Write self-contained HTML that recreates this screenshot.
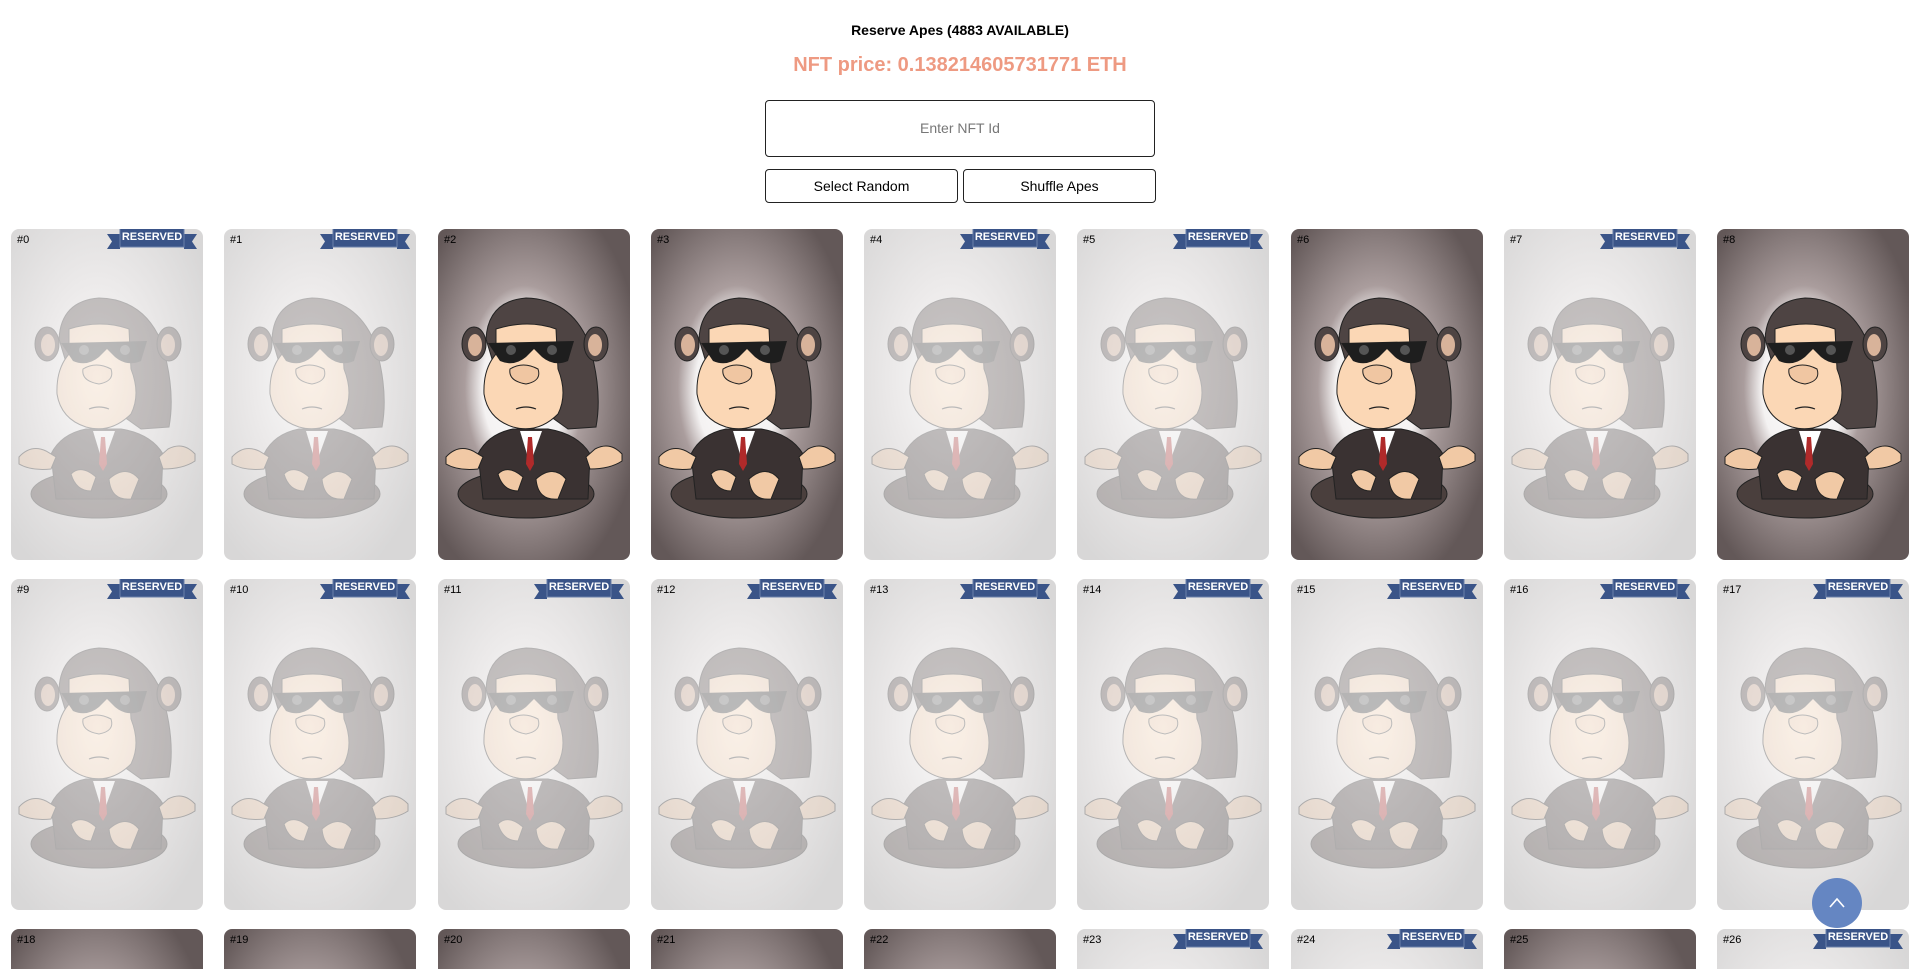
<!DOCTYPE html>
<html><head><meta charset="utf-8"><style>
html,body{margin:0;padding:0;background:#fff;overflow:hidden;width:1920px;height:969px;font-family:"Liberation Sans",Arial,sans-serif}
#wrap{position:relative;width:1920px;height:969px;overflow:hidden}
.t{position:absolute;left:0;width:1920px;text-align:center}
#h{top:22px;font-size:14px;font-weight:bold;color:#000}
#p{top:54px;font-size:20px;font-weight:bold;color:#ee9a82}
#inp{position:absolute;left:765px;top:100px;width:388px;height:55px;border:1px solid #222;border-radius:4px;text-align:center;line-height:55px;font-size:14px;color:#777}
.b{position:absolute;top:169px;width:191px;height:32px;border:1px solid #222;border-radius:4px;text-align:center;line-height:32px;font-size:14px;color:#000}
.c{position:absolute;width:192px;height:331px;border-radius:8px;overflow:hidden}
.c svg{position:absolute;left:0;top:0}
.n{position:absolute;left:6px;top:5px;font-size:11px;color:#000}
.r{position:absolute;right:6px;top:-1px;width:90px;height:24px}
#up{position:absolute;left:1812px;top:878px;width:50px;height:50px;border-radius:50%;background:#6586c2}
</style></head><body><div id="wrap">
<svg width="0" height="0" style="position:absolute">
<defs>
<radialGradient id="gd" cx="0.45" cy="0.48" r="0.62"><stop offset="0" stop-color="#fff"/><stop offset="0.35" stop-color="#f4f2f2"/><stop offset="0.5" stop-color="#aa9d9d"/><stop offset="1" stop-color="#635858"/></radialGradient>
<radialGradient id="gl" cx="0.45" cy="0.45" r="0.65"><stop offset="0" stop-color="#fbfbfb"/><stop offset="0.45" stop-color="#eceaea"/><stop offset="1" stop-color="#d8d7d7"/></radialGradient>
<symbol id="ape" viewBox="0 0 192 331">
<ellipse cx="88" cy="265" rx="68" ry="24" fill="#4a3f3d" stroke="#222" stroke-width="1"/>
<path d="M40 225 Q50 205 75 200 L110 200 Q140 205 152 225 L150 270 L45 270 Z" fill="#3a3232" stroke="#222"/>
<path d="M82 202 L92 235 L104 202 Z" fill="#fff"/>
<path d="M90 208 L94 208 L96 235 L92 242 L88 235 Z" fill="#b02a2a"/>
<path d="M8 228 Q20 215 35 222 L45 228 L40 240 Q20 242 8 235Z" fill="#f1c9a5" stroke="#222" stroke-width="1"/>
<path d="M184 225 Q172 212 157 220 L148 228 L152 240 Q172 240 184 232Z" fill="#f1c9a5" stroke="#222" stroke-width="1"/>
<path d="M60 245 Q70 235 85 248 L80 262 Q65 262 60 245Z" fill="#f1c9a5" stroke="#222" stroke-width="1"/>
<path d="M98 250 Q115 235 128 250 L120 270 Q100 272 98 250Z" fill="#f1c9a5" stroke="#222" stroke-width="1"/>
<path d="M48 110 Q50 72 88 69 Q132 70 150 112 Q165 160 158 198 L130 200 L60 150Z" fill="#4e4443" stroke="#222" stroke-width="1"/>
<ellipse cx="36" cy="115" rx="12" ry="17" fill="#4e4443" stroke="#222"/>
<ellipse cx="37" cy="116" rx="7" ry="11" fill="#d8b39a"/>
<ellipse cx="158" cy="115" rx="12" ry="17" fill="#4e4443" stroke="#222"/>
<ellipse cx="157" cy="116" rx="7" ry="11" fill="#d8b39a"/>
<path d="M58 100 Q90 90 118 100 L120 140 Q130 165 120 185 Q100 205 75 198 Q50 190 46 165 Q45 140 58 125Z" fill="#fbd7b5" stroke="#222" stroke-width="1"/>
<path d="M50 114 L136 112 L130 132 Q116 138 104 128 L96 120 L88 128 Q76 138 62 132Z" fill="#1e1e1e"/>
<circle cx="73" cy="121" r="5" fill="#555"/><circle cx="114" cy="121" r="5" fill="#555"/>
<path d="M72 140 Q85 132 100 140 Q104 152 88 155 Q70 152 72 140Z" fill="#f0c6a2" stroke="#222" stroke-width="1"/>
<path d="M78 180 Q88 176 98 180" fill="none" stroke="#222" stroke-width="1.2"/>
</symbol>
<symbol id="rib" viewBox="0 0 90 24">
<path d="M0 6 L13 6 L13 21 L0 21 L5 13.5Z" fill="#3a5488"/>
<path d="M90 6 L77 6 L77 21 L90 21 L85 13.5Z" fill="#3a5488"/>
<rect x="13" y="0" width="64" height="19" fill="#3a5488" stroke="#6a80aa" stroke-width="1"/>
</symbol>
</defs></svg>
<div class="t" id="h">Reserve Apes (4883 AVAILABLE)</div>
<div class="t" id="p">NFT price: 0.138214605731771 ETH</div>
<div id="inp">Enter NFT Id</div>
<div class="b" style="left:765px">Select Random</div>
<div class="b" style="left:963px">Shuffle Apes</div>
<div id="cards"></div>
<div id="up"><svg width="50" height="50"><path d="M18 29 L25 21 L32 29" fill="none" stroke="#fff" stroke-width="1.6"/></svg></div>
</div>
<script>
var dark={2:1,3:1,6:1,8:1,18:1,19:1,20:1,21:1,22:1,25:1};
var h='';
for(var i=0;i<27;i++){var col=i%9,row=Math.floor(i/9);var x=Math.round(11+col*213.25),y=229+row*350;var d=dark[i];
h+='<div class="c" style="left:'+x+'px;top:'+y+'px"><svg width="192" height="331"><rect width="192" height="331" fill="url(#'+(d?'gd':'gl')+')"/><g opacity="'+(d?1:0.28)+'"><use href="#ape"/></g></svg><div class="n">#'+i+'</div>'+(d?'':'<div class="r"><svg width="90" height="24"><use href="#rib"/></svg><span style="position:absolute;left:13px;top:3px;width:64px;text-align:center;color:#fff;font-size:11px;font-weight:bold">RESERVED</span></div>')+'</div>';}
document.getElementById('cards').innerHTML=h;
</script>
</body></html>
